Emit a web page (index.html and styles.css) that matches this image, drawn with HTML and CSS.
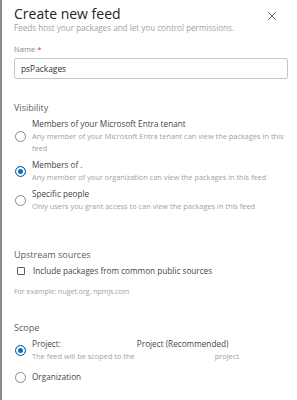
FILE: index.html
```html
<!DOCTYPE html>
<html lang="en">
<head>
    <meta charset="UTF-8">
    <meta name="viewport" content="width=device-width, initial-scale=1.0">
    <title>Create new feed</title>
    <link rel="stylesheet" href="styles.css">
</head>
<body>
    <div class="panel">
        <div class="header">
            <div>
                <h1 class="title">Create new feed</h1>
                <p class="subtitle">Feeds host your packages and let you control permissions.</p>
            </div>
            <svg class="close" width="8" height="8" viewBox="0 0 8 8">
                <path d="M0.5 0.5 L7.5 7.5 M7.5 0.5 L0.5 7.5" stroke="#605e5c" stroke-width="1" fill="none"/>
            </svg>
        </div>

        <label class="fieldLabel">Name <span class="req">*</span></label>
        <div class="inputBox">psPackages</div>

        <div class="section visibility">
            <h2 class="sectionTitle">Visibility</h2>

            <div class="option">
                <span class="radio"></span>
                <div class="optionText">
                    <div class="optionLabel">Members of your Microsoft Entra tenant</div>
                    <div class="optionDesc">Any member of your Microsoft Entra tenant can view the packages in this feed</div>
                </div>
            </div>

            <div class="option">
                <span class="radio checked"></span>
                <div class="optionText">
                    <div class="optionLabel">Members of .</div>
                    <div class="optionDesc">Any member of your organization can view the packages in this feed</div>
                </div>
            </div>

            <div class="option">
                <span class="radio"></span>
                <div class="optionText">
                    <div class="optionLabel">Specific people</div>
                    <div class="optionDesc">Only users you grant access to can view the packages in this feed</div>
                </div>
            </div>
        </div>

        <div class="section upstream">
            <h2 class="sectionTitle">Upstream sources</h2>
            <div class="checkRow">
                <span class="checkbox"></span>
                <span class="optionLabel">Include packages from common public sources</span>
            </div>
            <p class="hint">For example: nuget.org, npmjs.com</p>
        </div>

        <div class="section scope">
            <h2 class="sectionTitle">Scope</h2>

            <div class="option">
                <span class="radio checked"></span>
                <div class="optionText">
                    <div class="optionLabel">Project:<span class="blankA"></span>Project (Recommended)</div>
                    <div class="optionDesc">The feed will be scoped to the<span class="blankB"></span>project.</div>
                </div>
            </div>

            <div class="option">
                <span class="radio"></span>
                <div class="optionText">
                    <div class="optionLabel">Organization</div>
                </div>
            </div>
        </div>
    </div>
</body>
</html>
```

FILE: styles.css
```css
body{
    margin: 0;
    background: #fff;
    font-family: "Open Sans", "Noto Sans", sans-serif;
}

.panel{
    height: 400px;
    box-sizing: border-box;
    border-left: 2px solid #8c8c8c;
    padding: 5px 9px 0 12px;
}

.header{
    display: flex;
    justify-content: space-between;
    align-items: flex-start;
}

.title{
    font-size: 14px;
    font-weight: normal;
    color: #252423;
    margin: 0;
    line-height: 17px;
}

.subtitle{
    font-size: 8.1px;
    color: #a19f9d;
    margin: 0;
    line-height: 11px;
}

.close{
    display: block;
    margin-top: 7px;
    margin-right: 12px;
}

.fieldLabel{
    display: block;
    margin-top: 10px;
    font-size: 7.6px;
    color: #8a8886;
    line-height: 12px;
}

.req{
    color: #d13438;
}

.inputBox{
    margin-top: 3px;
    height: 21px;
    box-sizing: border-box;
    border: 1px solid #c8c6c4;
    border-radius: 2px;
    padding: 0 6px;
    font-size: 8.4px;
    line-height: 19px;
    color: #323130;
}

.visibility{
    margin-top: 22px;
}

.upstream{
    margin-top: 36px;
}

.scope{
    margin-top: 24px;
}

.sectionTitle{
    font-size: 9px;
    font-weight: normal;
    color: #605e5c;
    margin: 0 0 3px;
    line-height: 14px;
}

.option{
    display: flex;
    align-items: center;
    margin-bottom: 5px;
}

.scope .option{
    margin-bottom: 9px;
}

.optionText{
    margin-left: 6px;
}

.optionLabel{
    font-size: 8.2px;
    color: #484644;
    line-height: 12px;
}

.optionDesc{
    font-size: 7.4px;
    color: #a19f9d;
    line-height: 12px;
}

.blankA{
    display: inline-block;
    width: 76px;
}

.blankB{
    display: inline-block;
    width: 80px;
}

.radio{
    width: 11px;
    height: 11px;
    flex-shrink: 0;
    box-sizing: border-box;
    border: 1px solid #8a8886;
    border-radius: 50%;
    margin-left: 1px;
}

.radio.checked{
    border: 1.5px solid #0f6cbd;
    background: #0f6cbd;
    box-shadow: inset 0 0 0 2px #fff;
}

.checkRow{
    display: flex;
    align-items: center;
}

.checkbox{
    width: 8px;
    height: 8px;
    box-sizing: border-box;
    border: 1px solid #605e5c;
    border-radius: 1px;
    margin: 0 8px 0 3px;
}

.hint{
    margin: 10px 0 0;
    font-size: 7px;
    color: #a19f9d;
    line-height: 10px;
}
```
